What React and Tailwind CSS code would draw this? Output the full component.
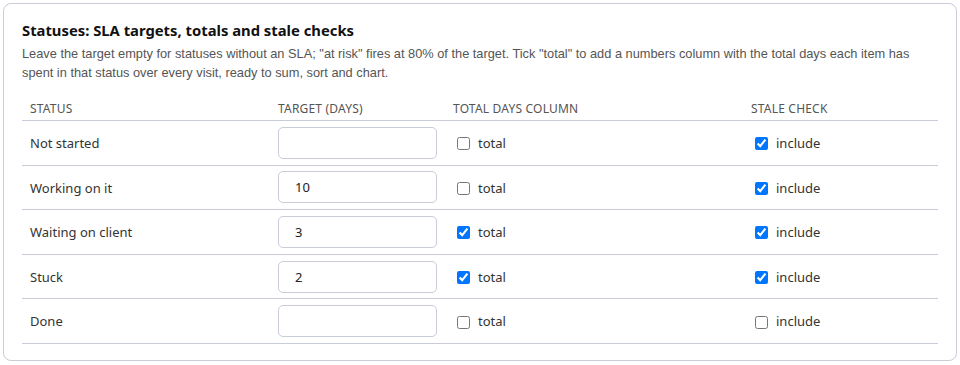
import { useState } from "react"

const rows = [
  { name: "Not started", target: "", total: false, stale: true },
  { name: "Working on it", target: "10", total: false, stale: true },
  { name: "Waiting on client", target: "3", total: true, stale: true },
  { name: "Stuck", target: "2", total: true, stale: true },
  { name: "Done", target: "", total: false, stale: false },
]

const grid = "grid grid-cols-[248px_175px_298px_194px]"

function Row({ row }) {
  const [target, setTarget] = useState(row.target)
  const [total, setTotal] = useState(row.total)
  const [stale, setStale] = useState(row.stale)

  return (
    <div className={`${grid} h-[44.6px] items-center border-b border-[#c9ccd9] text-[13px] text-[#333]`}>
      <div className="px-2 pt-[2px]">{row.name}</div>
      <div className="px-2">
        <input
          type="text"
          value={target}
          onChange={(e) => setTarget(e.target.value)}
          className="h-[32px] w-[159px] rounded-[5px] border border-[#c9ccd9] bg-white pl-4 text-[13px] text-[#222] outline-none"
        />
      </div>
      <label className="flex items-center gap-2 px-2 pt-[2px]">
        <input type="checkbox" checked={total} onChange={() => setTotal(!total)} className="m-0 ml-1 h-[13px] w-[13px]" />
        total
      </label>
      <label className="flex items-center gap-2 px-2 pt-[2px]">
        <input type="checkbox" checked={stale} onChange={() => setStale(!stale)} className="m-0 ml-1 h-[13px] w-[13px]" />
        include
      </label>
    </div>
  )
}

export default function App() {
  return (
    <div className="bg-white p-[3px]">
      <div className="rounded-lg border border-[#c9ccd9] px-[18px] pt-[16px] pb-[16px] font-['Noto_Sans',sans-serif]">
        <h2 className="text-[14.8px] leading-[20px] font-bold text-[#111]">Statuses: SLA targets, totals and stale checks</h2>
        <p className="mt-[4px] font-['Liberation_Sans',Arial,sans-serif] text-[12.8px] leading-[19px] text-[#555]">
          Leave the target empty for statuses without an SLA; "at risk" fires at 80% of the target. Tick "total" to add a
          numbers column with the total days each item has spent in that status over every visit, ready to sum, sort and
          chart.
        </p>
        <div className={`${grid} mt-[18px] border-b border-[#c9ccd9] pb-[2px] text-[12px] tracking-[0.2px] text-[#555] uppercase`}>
          <div className="px-2">Status</div>
          <div className="px-2">Target (days)</div>
          <div className="px-2">Total days column</div>
          <div className="px-2">Stale check</div>
        </div>
        {rows.map((row) => (
          <Row key={row.name} row={row} />
        ))}
      </div>
    </div>
  )
}
